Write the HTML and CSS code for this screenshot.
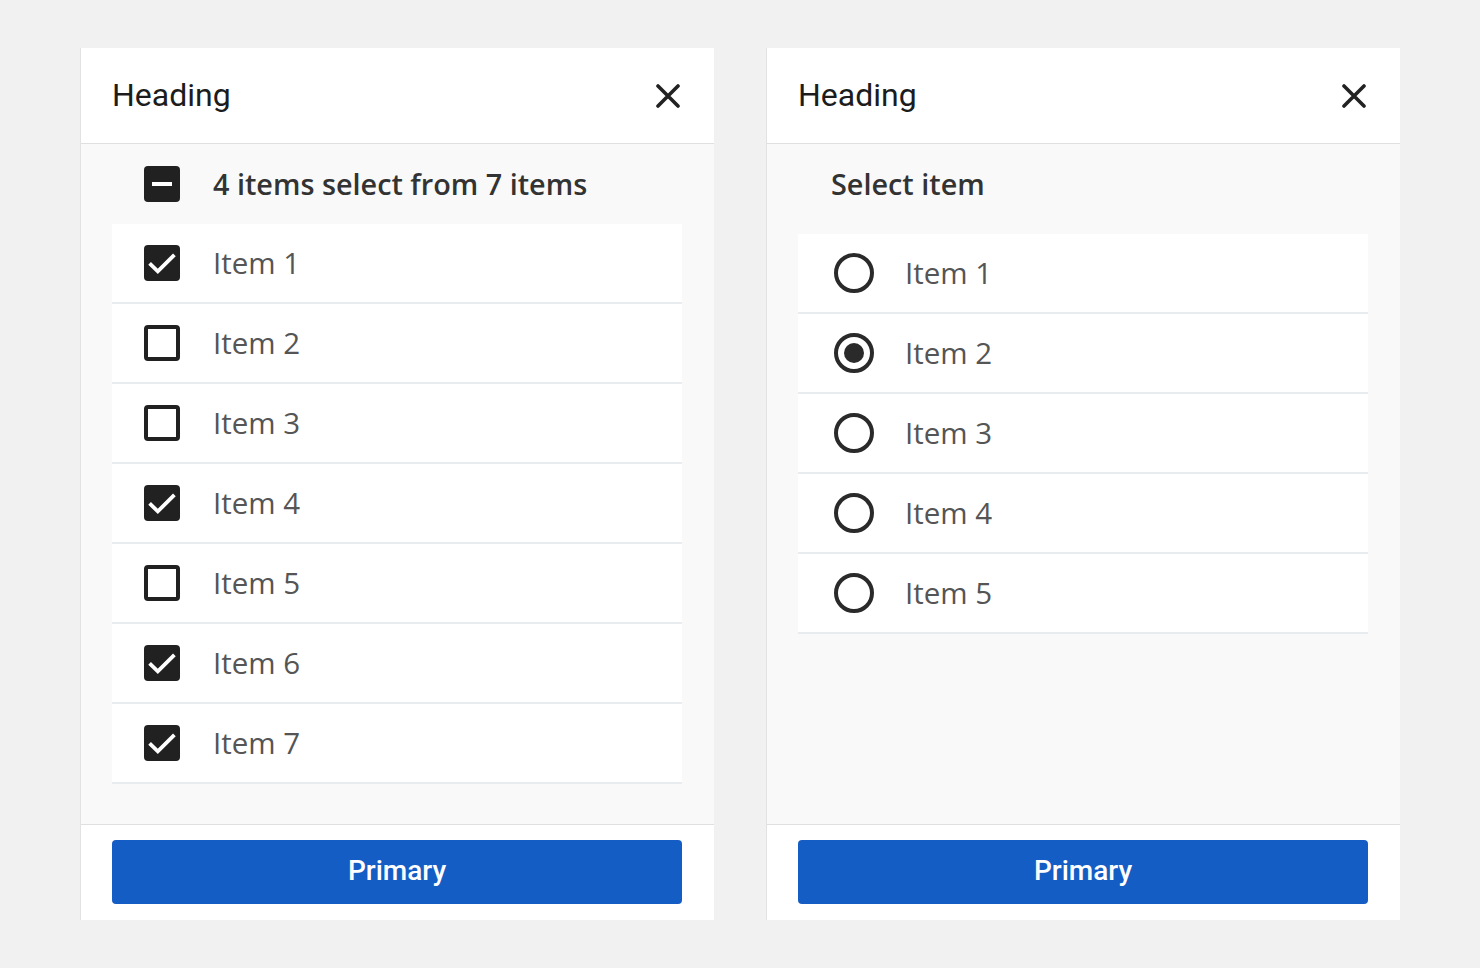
FILE: index.html
```html
<!DOCTYPE html>
<html lang="en">
<head>
<meta charset="utf-8">
<title>Selection panels</title>
<link rel="stylesheet" href="styles.css">
</head>
<body>
<main class="page">
  <section class="panel">
    <header class="panel-head">
      <h2 class="title">Heading</h2>
      <button class="close" aria-label="Close">
        <svg width="24" height="24" viewBox="0 0 24 24"><path d="M2 2L22 22M22 2L2 22" stroke="#222" stroke-width="3.6" stroke-linecap="round" fill="none"/></svg>
      </button>
    </header>
    <div class="panel-body">
      <div class="select-all">
        <span class="ctl ctl-box">
          <svg width="48" height="48" viewBox="0 0 24 24"><rect x="3" y="3" width="18" height="18" rx="2" fill="#212121"/><rect x="7" y="11" width="10" height="2" fill="#fff"/></svg>
        </span>
        <span class="group-label">4 items select from 7 items</span>
      </div>
      <ul class="list">
        <li class="row"><span class="ctl ctl-box"><svg width="48" height="48" viewBox="0 0 24 24"><rect x="3" y="3" width="18" height="18" rx="2" fill="#212121"/><path d="M5.8 12.2L9.9 16.2L18.2 7.9" stroke="#fff" stroke-width="1.9" fill="none"/></svg></span><span class="item-label">Item 1</span></li>
        <li class="row"><span class="ctl ctl-box"><svg width="48" height="48" viewBox="0 0 24 24"><rect x="4" y="4" width="16" height="16" rx="1" fill="none" stroke="#212121" stroke-width="2"/></svg></span><span class="item-label">Item 2</span></li>
        <li class="row"><span class="ctl ctl-box"><svg width="48" height="48" viewBox="0 0 24 24"><rect x="4" y="4" width="16" height="16" rx="1" fill="none" stroke="#212121" stroke-width="2"/></svg></span><span class="item-label">Item 3</span></li>
        <li class="row"><span class="ctl ctl-box"><svg width="48" height="48" viewBox="0 0 24 24"><rect x="3" y="3" width="18" height="18" rx="2" fill="#212121"/><path d="M5.8 12.2L9.9 16.2L18.2 7.9" stroke="#fff" stroke-width="1.9" fill="none"/></svg></span><span class="item-label">Item 4</span></li>
        <li class="row"><span class="ctl ctl-box"><svg width="48" height="48" viewBox="0 0 24 24"><rect x="4" y="4" width="16" height="16" rx="1" fill="none" stroke="#212121" stroke-width="2"/></svg></span><span class="item-label">Item 5</span></li>
        <li class="row"><span class="ctl ctl-box"><svg width="48" height="48" viewBox="0 0 24 24"><rect x="3" y="3" width="18" height="18" rx="2" fill="#212121"/><path d="M5.8 12.2L9.9 16.2L18.2 7.9" stroke="#fff" stroke-width="1.9" fill="none"/></svg></span><span class="item-label">Item 6</span></li>
        <li class="row"><span class="ctl ctl-box"><svg width="48" height="48" viewBox="0 0 24 24"><rect x="3" y="3" width="18" height="18" rx="2" fill="#212121"/><path d="M5.8 12.2L9.9 16.2L18.2 7.9" stroke="#fff" stroke-width="1.9" fill="none"/></svg></span><span class="item-label">Item 7</span></li>
      </ul>
    </div>
    <footer class="panel-foot">
      <button class="primary">Primary</button>
    </footer>
  </section>

  <section class="panel">
    <header class="panel-head">
      <h2 class="title">Heading</h2>
      <button class="close" aria-label="Close">
        <svg width="24" height="24" viewBox="0 0 24 24"><path d="M2 2L22 22M22 2L2 22" stroke="#222" stroke-width="3.6" stroke-linecap="round" fill="none"/></svg>
      </button>
    </header>
    <div class="panel-body">
      <div class="radio-head">
        <span class="group-label">Select item</span>
      </div>
      <ul class="list">
        <li class="row"><span class="ctl ctl-radio"><svg width="48" height="48" viewBox="0 0 24 24"><circle cx="12" cy="12" r="9" fill="none" stroke="#2a2a2a" stroke-width="2"/></svg></span><span class="item-label">Item 1</span></li>
        <li class="row"><span class="ctl ctl-radio"><svg width="48" height="48" viewBox="0 0 24 24"><circle cx="12" cy="12" r="9" fill="none" stroke="#2a2a2a" stroke-width="2"/><circle cx="12" cy="12" r="5" fill="#2a2a2a"/></svg></span><span class="item-label">Item 2</span></li>
        <li class="row"><span class="ctl ctl-radio"><svg width="48" height="48" viewBox="0 0 24 24"><circle cx="12" cy="12" r="9" fill="none" stroke="#2a2a2a" stroke-width="2"/></svg></span><span class="item-label">Item 3</span></li>
        <li class="row"><span class="ctl ctl-radio"><svg width="48" height="48" viewBox="0 0 24 24"><circle cx="12" cy="12" r="9" fill="none" stroke="#2a2a2a" stroke-width="2"/></svg></span><span class="item-label">Item 4</span></li>
        <li class="row"><span class="ctl ctl-radio"><svg width="48" height="48" viewBox="0 0 24 24"><circle cx="12" cy="12" r="9" fill="none" stroke="#2a2a2a" stroke-width="2"/></svg></span><span class="item-label">Item 5</span></li>
      </ul>
    </div>
    <footer class="panel-foot">
      <button class="primary">Primary</button>
    </footer>
  </section>
</main>
</body>
</html>
```

FILE: styles.css
```css
* { box-sizing: border-box; }

html, body {
  margin: 0;
  padding: 0;
  background: #f1f1f1;
}

body {
  font-family: "Open Sans", "Noto Sans", sans-serif;
  width: 1480px;
  height: 968px;
  overflow: hidden;
}

.page {
  display: flex;
  gap: 52px;
  padding: 48px 80px;
}

.panel {
  width: 634px;
  height: 872px;
  display: flex;
  flex-direction: column;
  background: #f9f9f9;
  border-left: 1px solid #e2e2e2;
}

.panel-head {
  height: 96px;
  flex: none;
  display: flex;
  align-items: center;
  justify-content: space-between;
  padding: 0 34px 0 31px;
  background: #fff;
  border-bottom: 1px solid #e0e0e0;
}

.title {
  margin: 0;
  padding-bottom: 2px;
  font-family: Roboto, "Noto Sans", sans-serif;
  font-weight: 400;
  font-size: 32px;
  line-height: 40px;
  color: #1c1c1c;
}

.close {
  display: flex;
  padding: 0;
  margin: 0;
  border: 0;
  background: none;
}

.panel-body {
  flex: 1;
  padding: 0 32px 0 31px;
}

.select-all,
.radio-head {
  height: 80px;
  display: flex;
  align-items: center;
}

.radio-head {
  margin-bottom: 10px;
}

.group-label {
  font-size: 28.8px;
  font-weight: 600;
  color: #333;
  line-height: 36px;
}

.radio-head .group-label {
  margin-left: 33px;
}

.list {
  list-style: none;
  margin: 0;
  padding: 0;
}

.row {
  height: 80px;
  display: flex;
  align-items: center;
  background: #fff;
  border-bottom: 2px solid #e9ecef;
}

.ctl {
  display: flex;
  flex: none;
}

.ctl-box { margin-left: 26px; }
.ctl-radio { margin-left: 32px; }

.ctl + .item-label,
.ctl + .group-label {
  margin-left: 27px;
}

.item-label {
  font-size: 29.5px;
  font-weight: 400;
  color: #555;
  line-height: 36px;
}

.panel-foot {
  height: 96px;
  flex: none;
  padding: 15px 32px 16px 31px;
  background: #fff;
  border-top: 1px solid #e0e0e0;
}

.primary {
  display: block;
  width: 100%;
  height: 64px;
  padding: 0 0 3px;
  border: 0;
  border-radius: 4px;
  background: #145dc4;
  color: #fff;
  font-family: Roboto, "Noto Sans", sans-serif;
  font-weight: 500;
  font-size: 28px;
  cursor: pointer;
}
```
